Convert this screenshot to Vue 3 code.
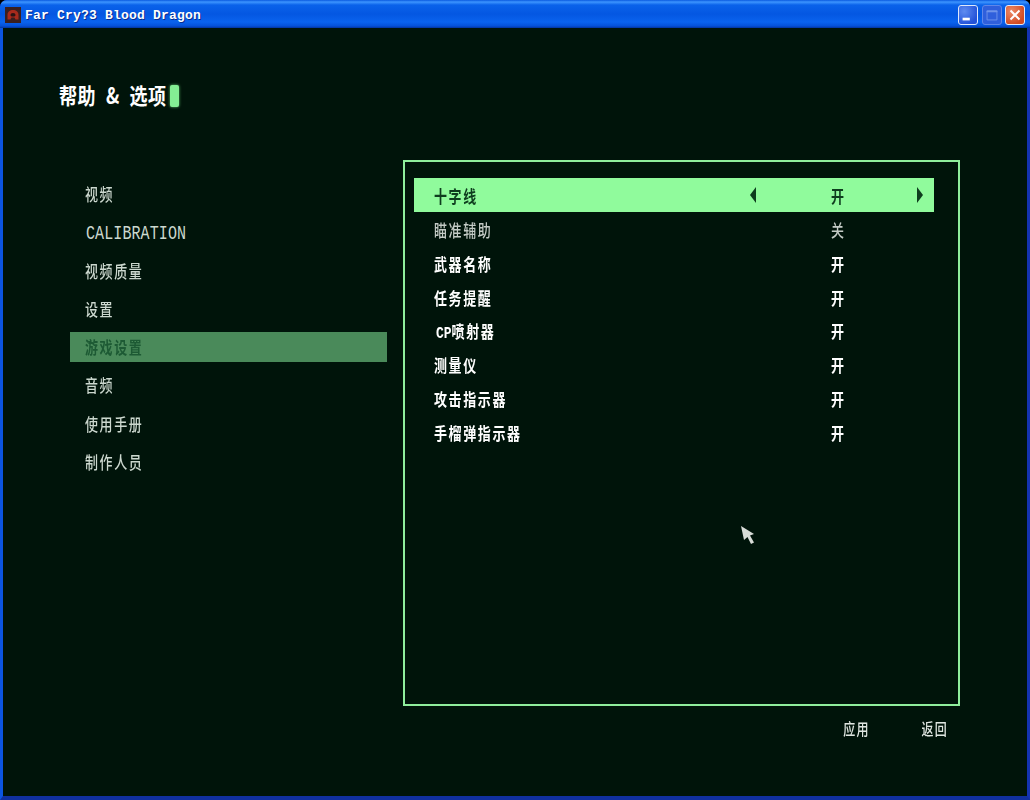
<template>
  <div class="window">
    <header class="titlebar">
      <svg class="app-icon" viewBox="0 0 16 16">
        <rect width="16" height="16" fill="#3a1f1f" />
        <path d="M2.500 12.500V8C2.500 4.500 5 3 8 3s5.500 1.500 5.500 5v4.500h-3L9.500 10.500h-3l-1 2z" fill="#a82a1c" />
        <path d="M5.500 8c0-1.300 1-2 2.500-2s2.500.7 2.500 2-1 1.500-2.500 1.500S5.500 9.300 5.500 8z" fill="#2a1414" />
      </svg>
      <span class="app-title">Far Cry?3 Blood Dragon</span>
      <div class="win-buttons">
        <div class="win-btn">
          <svg viewBox="0 0 20 20"><rect x="4" y="13" width="8" height="3" fill="#fff" /></svg>
        </div>
        <div class="win-btn off">
          <svg viewBox="0 0 20 20">
            <path d="M4.500 5.500h11v10h-11z" fill="none" stroke="#6f93ea" />
            <rect x="4" y="5" width="12" height="2" fill="#6f93ea" />
          </svg>
        </div>
        <div class="win-btn close">
          <svg viewBox="0 0 20 20"><path d="M5 5l10 10M15 5L5 15" stroke="#fff" stroke-width="2.200" /></svg>
        </div>
      </div>
    </header>

    <main class="client">
      <div class="heading">
        <span class="heading-text">帮助 &amp; 选项</span>
        <i class="caret"></i>
      </div>

      <div class="columns">
        <nav class="sidebar">
          <div
            v-for="item in menu"
            :key="item"
            :class="['menu-item', { active: item === '游戏设置' }]"
          >
            <span :class="item === 'CALIBRATION' ? 'latin' : 'cjk'">{{ item }}</span>
          </div>
        </nav>

        <section class="right">
          <div class="panel">
            <div
              v-for="(row, i) in rows"
              :key="row.name"
              :class="['row', { selected: i === 0, dim: i === 1 }]"
            >
              <span class="row-name cjk">
                <em v-if="row.prefix" class="prefix">{{ row.prefix }}</em>{{ row.name }}
              </span>
              <span v-if="i === 0" class="arrow left"></span>
              <span class="row-value cjk">{{ row.value }}</span>
              <span v-if="i === 0" class="arrow right"></span>
            </div>
            <svg class="pointer" viewBox="0 0 16 20">
              <path d="M1 1l13 8-4 1.500 4 7-3 1.500-3.500-7L4 15z" fill="#d8dcd8" />
            </svg>
          </div>
          <div class="actions">
            <span class="cjk">应用</span>
            <span class="cjk">返回</span>
          </div>
        </section>
      </div>
    </main>
  </div>
</template>

<script setup>
const menu = ['视频', 'CALIBRATION', '视频质量', '设置', '游戏设置', '音频', '使用手册', '制作人员']

const rows = [
  { name: '十字线', value: '开' },
  { name: '瞄准辅助', value: '关' },
  { name: '武器名称', value: '开' },
  { name: '任务提醒', value: '开' },
  { prefix: 'CP', name: '喷射器', value: '开' },
  { name: '测量仪', value: '开' },
  { name: '攻击指示器', value: '开' },
  { name: '手榴弹指示器', value: '开' },
]
</script>

<style scoped>
.window {
  width: 1030px;
  height: 800px;
  display: flex;
  flex-direction: column;
  overflow: hidden;
  border-radius: 7px 7px 0 0;
  background: #0a3fd8;
  font-family: "Noto Sans CJK SC", sans-serif;
}

.titlebar {
  height: 28px;
  flex: none;
  display: flex;
  align-items: center;
  padding: 2px 5px 0;
  box-sizing: border-box;
  background: linear-gradient(#0a5ae0 0, #3d95ff 2px, #0a62ea 5px, #0457e2 14px, #0a63ee 22px, #0551d8 26px, #03339c 28px);
}

.app-icon {
  width: 16px;
  height: 16px;
  margin-right: 4px;
}

.app-title {
  color: #fff;
  font-family: "Liberation Mono", monospace;
  font-weight: 700;
  font-size: 13px;
  letter-spacing: 0.2px;
  text-shadow: 1px 1px 0 #0a2f90;
}

.win-buttons {
  margin-left: auto;
  display: flex;
  gap: 3.5px;
}

.win-btn {
  width: 20px;
  height: 20px;
  box-sizing: border-box;
  border: 1px solid #dfe8fb;
  border-radius: 3px;
  background: radial-gradient(circle at 30% 30%, #5f8cf0, #2352d8 75%);
}

.win-btn svg {
  display: block;
  width: 100%;
  height: 100%;
}

.win-btn.off {
  border-color: #5f86e8;
  background: #2f5fdc;
}

.win-btn.close {
  background: radial-gradient(circle at 30% 30%, #ec8a66, #d24a22 75%);
}

.client {
  flex: 1;
  border-style: solid;
  border-width: 0 3px 4px;
  border-color: #0c55e0 #1433b0 #10309f #0c55e0;
  background: #00140a;
  color: #fff;
}

.heading {
  display: flex;
  align-items: center;
  height: 24px;
  margin: 56px 0 0 56px;
}

.heading-text {
  display: inline-block;
  font-size: 18px;
  font-weight: 700;
  word-spacing: 5px;
  white-space: pre;
  transform: translateY(-1.500px) scale(1, 1.22);
  letter-spacing: 0.6px;
}

.caret {
  width: 9px;
  height: 22px;
  margin-left: 3px;
  border-radius: 2px;
  background: #84ee94;
  box-shadow: 0 0 3px #5fc070;
}

.columns {
  display: flex;
  margin: 52px 0 0 67px;
  gap: 16px;
}

.sidebar {
  width: 317px;
  padding-top: 19px;
  display: flex;
  flex-direction: column;
  gap: 8.3px;
}

.menu-item {
  height: 30px;
  line-height: 26px;
  padding-left: 15px;
  color: #ccd8cf;
  font-weight: 500;
}

.menu-item.active {
  background: #4a8a5a;
  color: #1d5a34;
  font-weight: 700;
}

.cjk {
  display: inline-block;
  font-size: 13px;
  letter-spacing: 1.600px;
  transform: scale(1, 1.32);
  white-space: nowrap;
}

.latin {
  display: inline-block;
  margin-left: 1px;
  font-family: "Liberation Mono", monospace;
  font-size: 15px;
  letter-spacing: 0.1px;
  transform: translateY(1px) scale(1, 1.35);
}

.right {
  width: 557px;
}

.panel {
  position: relative;
  box-sizing: border-box;
  height: 546px;
  padding: 16px 0 0 9px;
  border: 2px solid #8fee9c;
}

.row {
  position: relative;
  width: 520px;
  height: 33.800px;
  line-height: 32px;
  font-weight: 700;
}

.row.selected {
  height: 34px;
  background: #90fb9c;
  color: #0e3d1e;
}

.row.dim {
  font-weight: 500;
  color: #c4cbc6;
}

.row-name {
  margin-left: 20px;
}

.prefix {
  display: inline-block;
  margin: 0 0 0 2px;
  font-family: "Liberation Mono", monospace;
  font-style: normal;
  font-weight: 700;
  letter-spacing: 0;
  line-height: 1;
}

.row-value {
  position: absolute;
  left: 417px;
  top: 2px;
}

.arrow {
  position: absolute;
  top: 9px;
  width: 0;
  height: 0;
  border-top: 8px solid transparent;
  border-bottom: 8px solid transparent;
}

.arrow.left {
  left: 336px;
  border-right: 6px solid #0e3d1e;
}

.arrow.right {
  left: 503px;
  border-left: 6px solid #0e3d1e;
}

.pointer {
  position: absolute;
  left: 335px;
  top: 363px;
  width: 16px;
  height: 20px;
  filter: blur(0.4px);
}

.actions {
  display: flex;
  justify-content: flex-end;
  gap: 52px;
  margin-top: 12px;
  padding-right: 12px;
  color: #dfe6e1;
  line-height: 20px;
  font-weight: 500;
}

.actions .cjk {
  font-size: 12px;
  letter-spacing: 1.200px;
}
</style>

<style>
html,
body {
  background: #000;
}
</style>
